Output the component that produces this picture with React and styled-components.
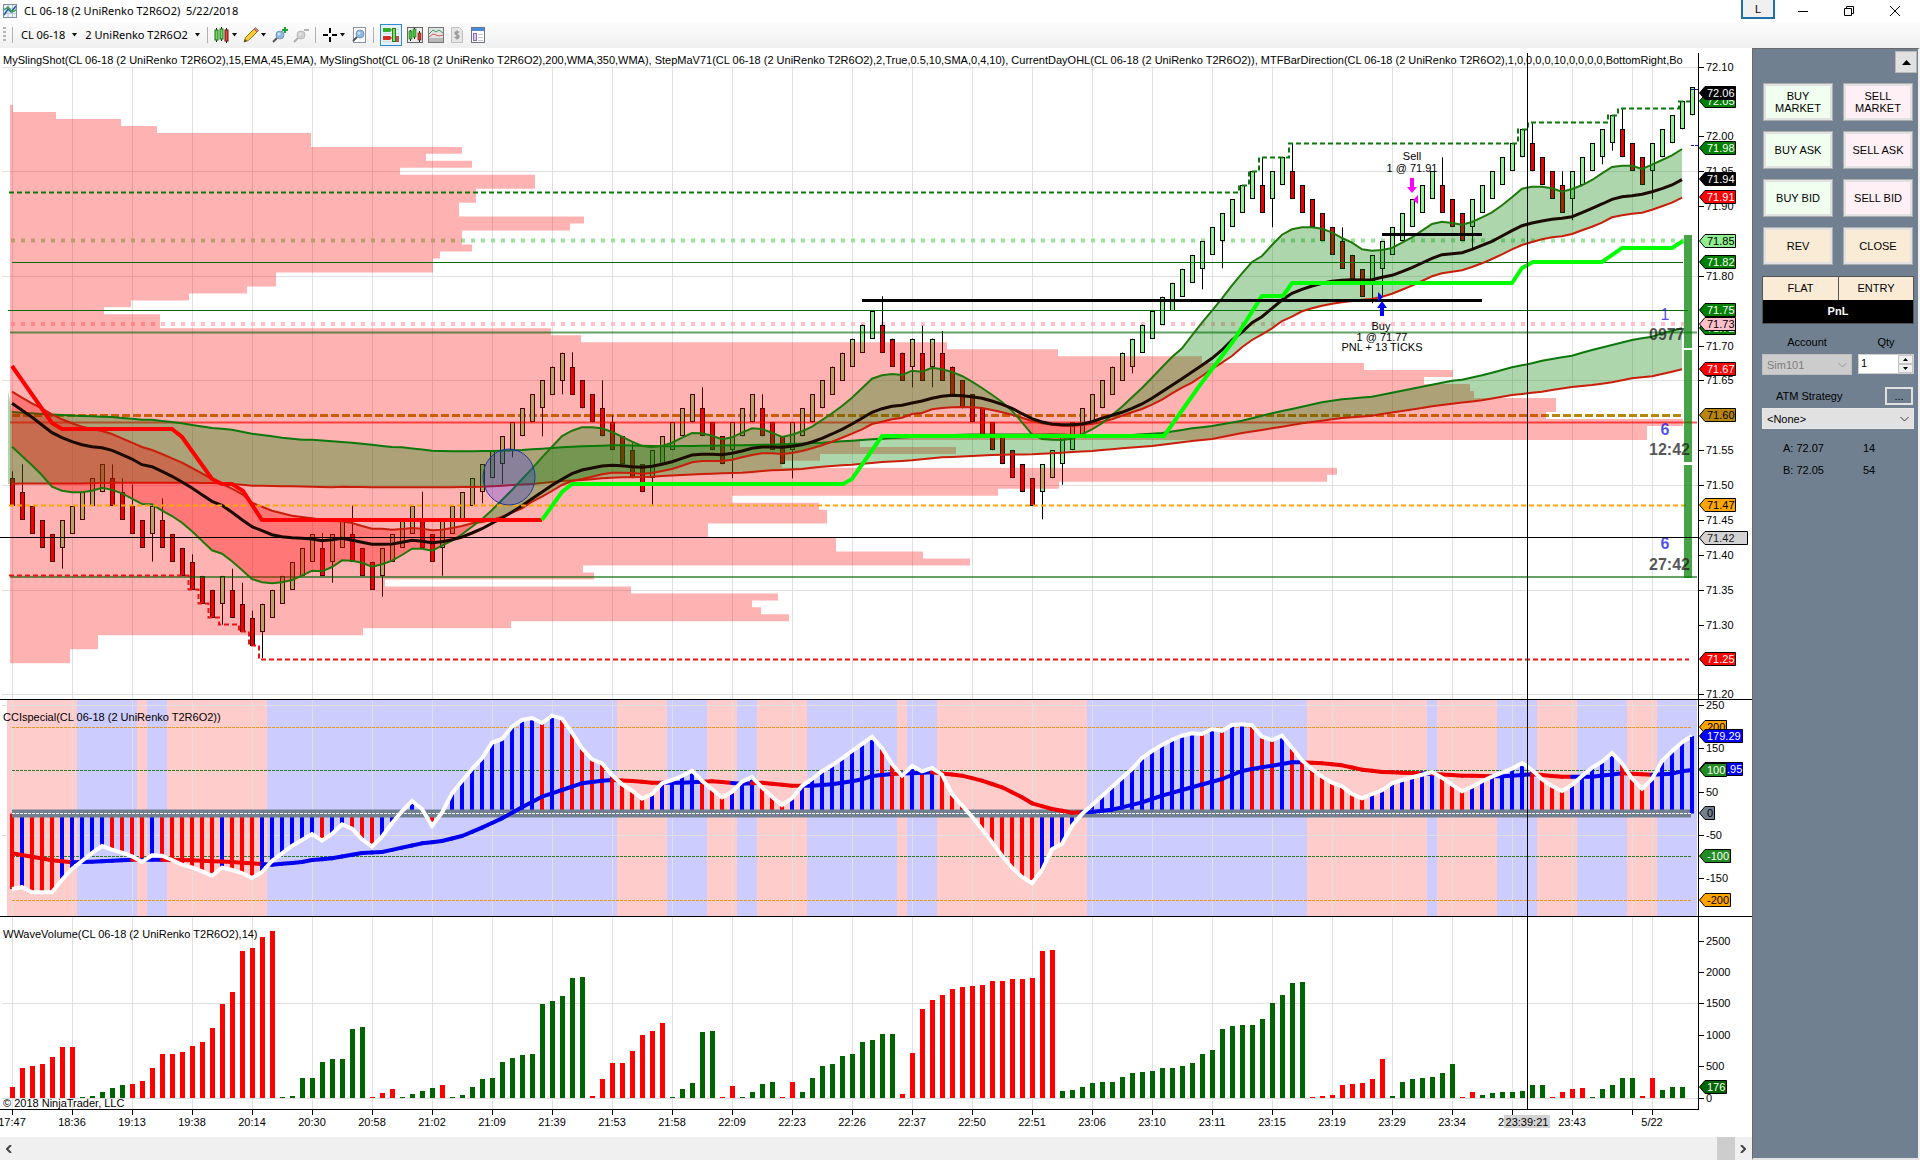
import React from "react";
import styled, { createGlobalStyle, css } from "styled-components";

const GlobalStyle = createGlobalStyle`
  * { box-sizing: border-box; }
  html, body { margin: 0; padding: 0; background: #fff; }
  body { font-family: "Liberation Sans", Arial, sans-serif; font-size: 11px; color: #000; }
  button, input, select { font: inherit; color: inherit; margin: 0; }
`;

/* ---------- data ---------- */

const BAR = 10;
const X0 = 12;
const X = (i) => X0 + BAR * i;
const third = (top, values) => values.map((v) => top + v / 3);
const pairs = (top, list) => {
  const out = [];
  for (let k = 0; k < list.length; k += 2) out.push([list[k], top + list[k + 1] / 3]);
  return out;
};
const expand = (points) => {
  const out = [];
  for (let k = 0; k < points.length - 1; k++) {
    const [a, ya] = points[k];
    const [b, yb] = points[k + 1];
    for (let i = a; i < b; i++) out.push(ya + ((yb - ya) * (i - a)) / (b - a));
  }
  out.push(points[points.length - 1][1]);
  return out;
};

const TICK = 6.977;
const priceY = (p) => 66.5 + (72.1 - p) * 697.7;

/* run lengths of the renko bars: positive = up bars, negative = down bars */
const RUNS = [-5, 5, -4, 1, -6, 1, -3, 6, -1, 2, -3, 4, -2, 13, -8, 5, -3, 3, -3, 9, -3, 1, -1, 1, -10, 22, -1, 2, -8, 7, -3, 6, -4, 5, -3, 5];

const WICKS_HIGH = {
  0: 471.3, 1: 464.3, 10: 464.3, 11: 478.3, 12: 484.3, 15: 498.3, 18: 554.3, 22: 568.7, 23: 582.7, 24: 610.7,
  31: 533, 34: 505.7, 41: 491.7, 56: 352.3, 59: 380.3, 60: 415.3, 62: 443.3, 69: 387.3, 75: 394.3, 87: 296.3,
  91: 325.7, 93: 331, 125: 157.3, 128: 143.3, 133: 227.3, 143: 157.3, 152: 123.3, 155: 171.3, 161: 108.3, 168: 87.3,
};
const WICKS_LOW = {
  5: 568.7, 14: 561.7, 21: 624.7, 25: 658.3, 32: 582.7, 37: 596.7, 43: 575.7, 47: 503.3, 49: 484.3, 50: 457.3,
  53: 436.3, 55: 394.3, 64: 504.7, 72: 478.3, 78: 478.3, 90: 387.3, 92: 387.3, 103: 519.3, 105: 484.7, 112: 373.3,
  119: 289.3, 121: 268.3, 126: 227.3, 136: 303.3, 137: 296.7, 146: 248, 156: 220.3, 159: 164.3, 160: 150.7, 164: 199.3,
};

const CANDLES = (() => {
  const out = [];
  let level = 71.51 + 0.02;
  let first = true;
  RUNS.forEach((run) => {
    for (let k = 0; k < Math.abs(run); k++) {
      if (first) { level = 71.51; first = false; } else level += run > 0 ? 0.02 : -0.02;
      out.push({ up: run > 0, top: priceY(level), height: 4 * TICK });
    }
  });
  out.push({ up: true, top: 94.3, height: 21 });
  return out;
})();

const PROFILE = [
  13, 56, 121, 157, 311, 311, 462, 426, 472, 400, 535, 535, 476, 476, 459, 459, 584, 570, 462, 462, 472, 440, 433, 433,
  276, 276, 247, 189, 131, 104, 160, 160, 551, 581, 947, 1058, 1202, 1364, 1453, 1424, 1470, 1474, 1556, 1556, 1546,
  1683, 1647, 1647, 860, 956, 820, 782, 1337, 1327, 1059, 998, 732, 819, 827, 827, 708, 708, 836, 836, 923, 970, 583,
  594, 385, 631, 778, 752, 761, 789, 511, 363, 98, 98, 70, 70,
];

const FAST_A = [
  ...third(360, [260, 288, 316, 346, 380, 392, 397, 397, 392, 383, 389, 400, 416, 432, 433, 452, 468, 488, 514, 542, 571, 581, 604, 630, 657, 667, 670, 667, 660, 647, 632, 634, 621, 601, 602, 608, 620, 613, 602, 585, 566, 566, 572, 557, 542, 523, 500, 478, 450, 420, 390, 358, 326, 292, 260, 228, 212, 202, 202, 205, 216, 230]),
  ...third(340, [305, 318, 322, 318, 308, 293, 279, 280, 287, 298, 292, 278, 265, 267, 278, 291, 284, 274, 260, 240, 220, 198, 173, 145, 116, 106, 102, 105, 92, 95, 83, 88, 96, 108, 125, 144, 164, 186, 212, 247, 283, 297, 299, 300, 296, 283, 268, 250, 225, 200, 172, 144, 113, 82, 51]),
  ...third(0, [1045, 1006, 968, 932, 895, 856, 820, 786, 768, 735, 704, 688, 682, 682, 686, 697, 714, 728, 748, 752, 750, 744, 728, 712, 692, 672, 665, 669, 674, 666, 652, 637, 616, 592, 566, 560, 560, 565, 575, 567, 556, 540, 520, 501, 497, 497, 507, 494, 480, 466, 447]),
];
const FAST_MID = [
  ...third(360, [130, 151, 172, 195, 218, 233, 245, 254, 260, 263, 271, 284, 297, 314, 320, 334, 349, 366, 384, 404, 424, 436, 457, 479, 500, 512, 524, 530, 533, 535, 537, 542, 539, 535, 541, 547, 553, 553, 552, 547, 541, 544, 548, 545, 539, 531, 519, 506, 490, 474, 456, 437, 416, 396, 376, 358]),
  ...third(340, [401, 390, 384, 378, 376, 377, 380, 382, 379, 373, 365, 355, 345, 343, 343, 344, 340, 333, 325, 321, 321, 322, 319, 314, 306, 295, 282, 268, 252, 235, 217, 206, 199, 196, 189, 183, 175, 169, 166, 167, 170, 175, 183, 193, 205, 221, 236, 246, 252, 254, 254, 252, 245, 235, 226, 217, 205, 192, 175, 155, 136, 116, 96]),
  ...third(0, [1096, 1075, 1050, 1020, 996, 968, 950, 925, 900, 880, 868, 858, 850, 844, 841, 839, 840, 839, 832, 826, 815, 803, 789, 775, 764, 761, 758, 748, 736, 724, 708, 692, 677, 669, 663, 658, 655, 650, 638, 625, 612, 598, 590, 587, 583, 575, 566, 555, 539]),
];
const FAST_B = [
  ...third(360, [95, 113, 130, 146, 163, 178, 190, 200, 207, 213, 222, 235, 248, 261, 270, 282, 295, 308, 324, 340, 357, 372, 386, 402, 428, 440, 452, 460, 467, 471, 475, 480, 483, 484, 489, 498, 506, 506, 509, 507, 504, 506, 511, 509, 504, 498, 490, 486, 480, 470, 458, 445, 425, 410, 393, 375, 363, 357, 350, 343, 338, 338]),
  ...third(340, [399, 401, 399, 393, 387, 377, 367, 363, 363, 363, 359, 352, 345, 340, 340, 342, 339, 333, 325, 316, 305, 293, 281, 268, 252, 245, 238, 233, 222, 219, 208, 204, 202, 201, 202, 204, 210, 217, 224, 233, 243, 250, 254, 257, 258, 255, 252, 245, 238, 227, 217, 207, 194, 179, 160, 143, 128]),
  ...third(0, [1128, 1107, 1088, 1068, 1042, 1020, 1003, 985, 963, 950, 934, 925, 917, 911, 907, 903, 899, 897, 890, 881, 869, 857, 843, 829, 820, 815, 811, 801, 790, 777, 763, 748, 735, 726, 718, 712, 709, 702, 691, 680, 668, 652, 646, 641, 638, 629, 619, 608, 593]),
];
const SLOW_A = expand([
  ...pairs(360, [0, 156, 2, 160, 5, 165, 8, 169, 10, 171, 13, 179, 14, 179, 17, 190, 20, 204, 22, 209, 24, 221, 27, 233, 29, 239, 30, 239, 34, 248, 38, 261, 39, 262, 42, 272, 44, 274, 48, 273, 51, 270, 53, 266, 56, 260, 60, 256]),
  ...pairs(340, [61, 316, 65, 319, 70, 317, 76, 314, 81, 308, 87, 296, 91, 289, 95, 284, 104, 283, 109, 287, 112, 285, 115, 279, 118, 265, 120, 258, 123, 242, 126, 220, 129, 200, 131, 187, 133, 178, 136, 170, 139, 152, 142, 134, 144, 122, 145, 119, 147, 106, 150, 82, 152, 70, 153, 62, 156, 47, 158, 30, 160, 15]),
  ...pairs(0, [162, 1020, 164, 1010, 165, 1000, 167, 985]),
]);
const SLOW_B = expand([
  ...pairs(360, [0, 371, 8, 370, 10, 368, 17, 368, 20, 369, 22, 372, 24, 377, 30, 380, 32, 382, 33, 380, 36, 382, 44, 382, 47, 380, 49, 377, 52, 372, 55, 363, 57, 360, 59, 355, 61, 352]),
  ...pairs(340, [62, 412, 64, 410, 67, 405, 70, 401, 73, 398, 76, 391, 79, 387, 81, 380, 84, 374, 87, 366, 90, 361, 93, 352, 96, 348, 99, 344, 102, 343, 105, 338, 108, 333, 111, 325, 114, 318, 118, 303, 120, 297, 123, 279, 126, 265, 129, 250, 131, 242, 133, 234, 136, 227, 139, 213, 142, 199, 144, 191, 147, 181, 150, 165, 153, 155, 156, 141, 158, 135, 160, 127, 162, 115, 164, 109, 167, 88]),
]);

const STEP_DOWN = "12,366 52,423 62,429 172,429 182,437 212,479 222,484 232,484 243,491 262,520 542,520";
const STEP_UP = "542,520 562,492 572,484 843,484 852,479 882,436 1164,436 1200,385 1234,340 1262,296 1283,296 1292,283 1512,283 1522,268 1533,262 1602,262 1622,248 1672,248 1683,241";

const CCI = [
  ...third(690, [597, 591, 607, 607, 607, 569, 537, 513, 489, 468, 479, 488, 499, 516, 496, 497, 510, 524, 532, 544, 557, 533, 540, 549, 564, 546, 513, 490, 468, 450, 432, 452, 432, 403, 416, 448, 470, 440, 400, 364, 333, 357, 408, 368, 310, 273, 237, 205, 158, 147, 110, 90, 84, 99, 77, 86, 128, 175, 208, 220, 255, 283, 302, 326, 312, 280, 270, 258, 242, 272, 298, 322, 306, 275, 261, 292, 320, 345, 325, 288, 267, 244, 226, 205, 183, 162, 140, 175, 222, 257, 228, 244, 234, 254, 312, 346, 380, 418, 457, 497, 533, 561, 580, 541, 478, 461, 408, 372, 345, 318, 290, 264, 237, 204, 183, 165, 149, 137, 130, 132, 117, 123, 105, 103, 106, 140, 150, 137, 173, 211, 238, 260, 278, 289, 312, 325, 312, 301, 280, 270, 262, 254, 246, 263, 284, 304, 290, 274, 260, 248, 236, 219, 240, 268, 288, 303, 285, 258, 233, 215, 189, 220, 265, 296, 267, 213, 184, 157, 138]),
];
const CCI_AVG = expand(
  pairs(690, [0, 490, 2, 500, 4, 511, 6, 517, 9, 514, 12, 509, 15, 509, 18, 511, 22, 516, 26, 524, 29, 516, 30, 510, 32, 505, 35, 489, 37, 486, 41, 460, 43, 453, 45, 438, 47, 413, 49, 385, 51, 352, 53, 320, 55, 300, 57, 280, 59, 272, 60, 270, 62, 273, 64, 278, 67, 278, 70, 274, 73, 281, 75, 278, 78, 287, 80, 287, 82, 283, 84, 274, 85, 268, 86, 258, 88, 252, 92, 247, 95, 257, 97, 272, 99, 292, 101, 322, 102, 340, 104, 357, 106, 368, 108, 366, 110, 359, 111, 352, 113, 337, 115, 317, 117, 300, 121, 267, 123, 243, 124, 237, 126, 227, 128, 217, 129, 217, 131, 220, 133, 226, 135, 239, 137, 246, 141, 250, 145, 257, 149, 259, 152, 253, 155, 260, 158, 260, 161, 250, 164, 254, 166, 251, 167, 244, 168, 240])
);
/* first bar of each background stripe, alternating falling / rising */
const STRIPES = [0, 7, 13, 14, 16, 26, 61, 66, 70, 73, 75, 80, 89, 90, 93, 108, 130, 142, 143, 149, 153, 157, 162, 165, 169];
const stripeOf = (i) => STRIPES.filter((s) => s <= i).length - 1;

const VOLUME = [
  -11, -30, -32, -34, -41, -51, -51, 1, 2, 6, 10, 13, -14, -17, -30, -44, -44, -46, -52, -56, -70, -94, -106, -147, -150,
  -161, -167, 1, 2, 20, 20, 36, 39, 39, 69, 71, -1, -5, -9, 1, 4, 7, 10, -13, 1, 3, 11, 19, 20, 36, 40, 43, 44, 94, 97,
  102, 120, 121, -2, -19, -35, -35, -47, -63, -67, -75, 1, 9, 15, 66, 67, -1, -12, 1, 6, 14, 16, -1, -16, 6, 20, 32, 34,
  42, 44, 56, 58, 64, 64, -4, -45, -89, -98, -103, -109, -111, -112, -113, -117, -117, -119, -119, -120, -147, -148, 7,
  8, 11, 15, 16, 16, 21, 25, 26, 27, 30, 30, 32, 35, 44, 48, 69, 72, 73, 73, 79, 95, 103, 115, 116, -1, -2, -3, -13, -14,
  -15, -19, -39, 2, 16, 19, 20, 21, 25, 34, -1, -6, 3, 5, 6, 6, 7, 13, 13, -1, -6, -9, -10, 1, 9, 13, 20, 20, -2, -20, 8,
  11, 11,
];

const TIMES = ["17:47", "18:36", "19:13", "19:38", "20:14", "20:30", "20:58", "21:02", "21:09", "21:39", "21:53", "21:58", "22:09", "22:23", "22:26", "22:37", "22:50", "22:51", "23:06", "23:10", "23:11", "23:15", "23:19", "23:29", "23:34"];
const GRID_X = [...Array.from({ length: 28 }, (_, k) => 12 + 60 * k), 1652];

const AXIS_X = 1698;
const CROSS_X = 1527;

/* ---------- drawing helpers ---------- */

const line = (values) => values.map((y, i) => `${X(i)},${y.toFixed(1)}`).join(" ");

const bandPaths = (a, b) => {
  let up = "";
  let down = "";
  const quad = (x1, a1, b1, x2, a2, b2) => `M${x1} ${a1}L${x2} ${a2}L${x2} ${b2}L${x1} ${b1}Z`;
  for (let i = 0; i < a.length - 1; i++) {
    const d1 = b[i] - a[i];
    const d2 = b[i + 1] - a[i + 1];
    const args = [X(i), a[i], b[i]];
    const end = [X(i + 1), a[i + 1], b[i + 1]];
    if (d1 * d2 >= 0) {
      if (d1 + d2 >= 0) up += quad(...args, ...end);
      else down += quad(...args, ...end);
    } else {
      const t = d1 / (d1 - d2);
      const mid = [X(i) + BAR * t, a[i] + (a[i + 1] - a[i]) * t, a[i] + (a[i + 1] - a[i]) * t];
      if (d1 > 0) { up += quad(...args, ...mid); down += quad(...mid, ...end); }
      else { down += quad(...args, ...mid); up += quad(...mid, ...end); }
    }
  }
  return { up, down };
};
const FAST_BAND = bandPaths(FAST_A, FAST_B);
const SLOW_BAND = bandPaths(SLOW_A, SLOW_B);

/* ---------- styled parts ---------- */

const Window = styled.main`
  display: flex;
  flex-direction: column;
  min-height: 100vh;
  height: 100vh;
  overflow: hidden;
`;

const uiFont = css`
  font-family: "Noto Sans", "Open Sans", sans-serif;
  font-size: 11px;
  line-height: 16px;
`;

const TitleBar = styled.header`
  ${uiFont}
  display: flex;
  align-items: center;
  height: 22px;
  padding: 0 2px 0 3px;
  gap: 5px;
`;
const Title = styled.h1`
  font: inherit;
  margin: 0;
  white-space: pre;
`;
const LinkBox = styled.button`
  align-self: flex-start;
  width: 34px;
  height: 19px;
  margin-left: auto;
  padding: 0;
  border: 2px solid #1e6fb0;
  border-top: 0;
  background: #f0f0f0;
  font-family: "Liberation Sans", Arial, sans-serif;
  font-size: 11px;
`;
const WindowButtons = styled.div`
  display: flex;
`;
const WindowButton = styled.button`
  display: grid;
  place-items: center;
  width: 46px;
  height: 22px;
  border: 0;
  padding: 0;
  background: none;
`;

const Toolbar = styled.div`
  ${uiFont}
  display: flex;
  align-items: center;
  gap: 5px;
  height: 26px;
  padding-left: 3px;
  background: linear-gradient(#fdfdfd, #f0f0f0);
`;
const Grip = styled.span`
  width: 3px;
  height: 16px;
  background: repeating-linear-gradient(#b4b4b4 0 2px, transparent 2px 4px);
`;
const Separator = styled.span`
  width: 1px;
  height: 16px;
  margin: 0 1px;
  background: #b0b0b0;
`;
const ToolButton = styled.button`
  display: flex;
  align-items: center;
  justify-content: center;
  gap: ${(p) => (p.$text ? 6 : 1)}px;
  height: 22px;
  min-width: ${(p) => (p.$active ? 22 : 16)}px;
  padding: 0 0 0 ${(p) => (p.$text ? 2 : 0)}px;
  border: ${(p) => (p.$active ? "1px solid #2a8ad4" : "0")};
  background: ${(p) => (p.$active ? "#e5f1fb" : "none")};
  white-space: nowrap;
`;

const Body = styled.div`
  display: flex;
  flex: 1;
  min-height: 0;
`;
const ChartColumn = styled.section`
  display: flex;
  flex-direction: column;
  flex: 1;
  min-width: 0;
`;
const Pane = styled.div`
  flex: ${(p) => p.$weight} 1 0;
  min-height: 0;
`;
const PaneSvg = styled.svg`
  display: block;
  width: 100%;
  height: 100%;
  font-family: "Liberation Sans", Arial, sans-serif;
  font-size: 11px;
`;
const ScrollBar = styled.div`
  display: flex;
  align-items: center;
  justify-content: space-between;
  height: 23px;
  padding: 0 3px;
  background: #f0f0f0;
`;
const ScrollEnd = styled.div`
  display: flex;
  align-self: stretch;
  align-items: center;
  gap: 2px;
`;
const ScrollButton = styled.button`
  display: grid;
  place-items: center;
  width: 12px;
  height: 20px;
  padding: 0;
  border: 0;
  background: none;
`;
const Thumb = styled.span`
  align-self: stretch;
  width: 18px;
  background: #cdcdcd;
`;

const Sidebar = styled.aside`
  display: flex;
  flex-direction: column;
  width: 168px;
  background: #708090;
  border: solid #6a6a6a;
  border-width: 1px 0 0 1px;
  border-right: 2px solid #f0f0f0;
  border-bottom: 2px solid #e4e4e4;
  padding: 2px 1px 0 9px;
`;
const Collapse = styled.button`
  align-self: flex-end;
  display: grid;
  place-items: center;
  width: 22px;
  height: 22px;
  padding: 0;
  border: 1px solid #b8b8b8;
  background: #e1e1e1;
`;
const Content = styled.div`
  display: flex;
  flex-direction: column;
  padding-right: 3px;
`;
const OrderGrid = styled.div`
  display: grid;
  grid-template-columns: 70px 70px;
  grid-auto-rows: 38px;
  gap: 10px;
  padding: 10px 0 11px 1px;
`;
const OrderButton = styled.button`
  padding: 0;
  border: 1px solid #adadad;
  box-shadow: inset 0 0 0 2px #e1e1e1;
  background: ${(p) => p.$tone};
  line-height: 12px;
`;
const Position = styled.dl`
  display: grid;
  grid-template-columns: 1fr 1fr;
  margin: 0;
  border: 1px solid #555;
  background: #faebd7;
  text-align: center;
`;
const PositionCell = styled.dt`
  height: 23px;
  line-height: 22px;
  border-left: ${(p) => (p.$divided ? "1px solid #555" : "0")};
`;
const Pnl = styled.dd`
  grid-column: 1 / -1;
  margin: 0;
  height: 23px;
  line-height: 23px;
  background: #000;
  color: #fff;
  font-weight: bold;
`;
const FieldGrid = styled.div`
  display: grid;
  grid-template-columns: 90px 56px;
  column-gap: 6px;
  row-gap: 5px;
  padding-top: 12px;
`;
const FieldLabel = styled.label`
  text-align: center;
  line-height: 13px;
`;
const SelectBox = styled.div`
  display: grid;
  align-items: center;
  > * { grid-area: 1 / 1; }
  > svg { justify-self: end; margin-right: 5px; pointer-events: none; }
`;
const Select = styled.select`
  appearance: none;
  width: 100%;
  height: 21px;
  padding: 0 4px;
  border: 1px solid ${(p) => (p.disabled ? "#bfbfbf" : "#e8e8e8")};
  border-radius: 0;
  background: ${(p) => (p.disabled ? "#cccccc" : "#e1e1e1")};
  color: ${(p) => (p.disabled ? "#7d7d7d" : "#000")};
  opacity: 1;
`;
const Quantity = styled.div`
  display: flex;
  height: 20px;
  border: 1px solid #d0d0d0;
  background: #fff;
`;
const QuantityInput = styled.input`
  flex: 1;
  width: 0;
  padding: 0 2px 3px;
  border: 0;
  background: none;
`;
const Stepper = styled.div`
  display: grid;
  width: 15px;
  background: #f0f0f0;
`;
const StepButton = styled.button`
  display: grid;
  place-items: center;
  padding: 0;
  border: 1px solid #c4c4c4;
  background: #f0f0f0;
`;
const StrategyRow = styled.div`
  display: flex;
  align-items: center;
  justify-content: space-between;
  padding: 12px 1px 3px 14px;
`;
const MoreButton = styled.button`
  width: 28px;
  height: 18px;
  padding: 0;
  border: 2px solid #e1e1e1;
  background: #708090;
  line-height: 10px;
`;
const QuoteTable = styled.table`
  width: 110px;
  margin: 8px 0 0 21px;
  border-collapse: collapse;
`;
const QuoteCell = styled.td`
  width: ${(p) => p.$width}px;
  height: 22px;
  padding: 0;
`;

/* ---------- icons ---------- */

const Caret = () => (
  <svg width="7" height="4" viewBox="0 0 7 4" aria-hidden="true"><path d="M1 0h5L3.500 3.500Z" fill="#111" /></svg>
);
const Chevron = ({ color }) => (
  <svg width="9" height="6" viewBox="0 0 9 6" aria-hidden="true"><path d="M.5 1l4 4 4-4" fill="none" stroke={color} /></svg>
);
const Icon = ({ children }) => (
  <svg width="16" height="16" viewBox="0 0 16 16" aria-hidden="true">{children}</svg>
);
const Lens = ({ cx, cy, gray }) => (
  <g>
    <path d={`M${cx - 3} ${cy + 3}L${cx - 7} ${cy + 7}`} stroke={gray ? "#aaa" : "#555"} strokeWidth="2" />
    <circle cx={cx} cy={cy} r="4" fill={gray ? "#d0d0d0" : "#8fb8e0"} stroke={gray ? "#b8b8b8" : "#7898b8"} />
    <circle cx={cx - 1} cy={cy - 1} r="1.500" fill={gray ? "#e4e4e4" : "#cfe4f6"} />
  </g>
);
const ChartIcon = () => (
  <Icon>
    <rect x=".5" y="1.500" width="13" height="13" fill="#eef2fa" stroke="#7a8ea8" />
    <path d="M1 5.500h12M1 10.500h12M5 2v12M9.500 2v12" stroke="#b8c8dc" />
    <path d="M1 12l4-6 3 3 5-6" stroke="#2456b0" strokeWidth="1.500" fill="none" />
    <path d="M1 7l4-3 4 5 4-2" stroke="#3ca04a" strokeWidth="1.500" fill="none" />
  </Icon>
);
const CandlesIcon = () => (
  <Icon>
    <path d="M2.500 1v14M7.500 0v14M12.500 1v15" stroke="#222" />
    <rect x="1" y="3" width="3" height="10" fill="#6ee05a" stroke="#1d6b16" />
    <rect x="6" y="2" width="3" height="10" fill="#6ee05a" stroke="#1d6b16" />
    <rect x="11" y="3" width="3" height="11" fill="#e04a40" stroke="#6a1410" />
  </Icon>
);
const PencilIcon = () => (
  <Icon>
    <path d="M1 15l1.500-4.500L11 2l3 3-8.500 8.500Z" fill="#f4cc3a" stroke="#9a7a10" />
    <path d="M11 2l1.500-1.500 3 3L14 5Z" fill="#e0807a" stroke="#a04a40" strokeWidth=".6" />
    <path d="M1 15l1-3 2 2Z" fill="#444" />
  </Icon>
);
const ZoomInIcon = () => (
  <Icon><Lens cx={8} cy={8} /><path d="M13 0v6M10 3h6" stroke="#19a336" strokeWidth="2" /></Icon>
);
const ZoomOutIcon = () => (
  <Icon><Lens cx={8} cy={8} gray /><path d="M11 3h5" stroke="#b4b4b4" strokeWidth="2" /></Icon>
);
const CrosshairIcon = () => (
  <Icon><path d="M8 1v5M8 10v5M1 8h5M10 8h5" stroke="#000" strokeWidth="2" /></Icon>
);
const PageLensIcon = () => (
  <Icon><rect x="2.500" y=".5" width="12" height="15" fill="#fff" stroke="#8a94a4" /><Lens cx={9} cy={7} /></Icon>
);
const TraderIcon = () => (
  <Icon>
    <path d="M0 2.500h16M0 6.500h16M0 10.500h16M0 14.500h16" stroke="#d8d8d8" />
    <path d="M0 1h7l2 2-2 2H0Z" fill="#2fae2a" />
    <path d="M0 9h7l2 2-2 2H0Z" fill="#d62c24" />
    <rect x="9.500" y="1.500" width="3" height="13" fill="#7be06a" stroke="#2a7a20" />
    <rect x="13" y="9" width="3" height="6" fill="#c0504a" />
  </Icon>
);
const BarsBoxIcon = () => (
  <Icon>
    <rect x=".5" y=".5" width="15" height="15" fill="#ececec" stroke="#666" />
    <path d="M3.500 3v11M7.500 1v11M12.500 4v11" stroke="#222" />
    <rect x="2" y="4" width="3" height="8" fill="#4bc23c" stroke="#1d6b16" strokeWidth=".6" />
    <rect x="6" y="2" width="3" height="8" fill="#4bc23c" stroke="#1d6b16" strokeWidth=".6" />
    <rect x="11" y="6" width="3" height="7" fill="#d83a30" stroke="#6a1410" strokeWidth=".6" />
  </Icon>
);
const LinesBoxIcon = () => (
  <Icon>
    <rect x=".5" y=".5" width="15" height="15" fill="#e2e2e2" stroke="#777" />
    <rect x="1" y="11" width="14" height="4" fill="#b8b8b8" />
    <path d="M1 7l4-4 3 2 3-2 4 3" stroke="#38a060" fill="none" />
    <path d="M1 10l4-3 3 1 3 1 4-1" stroke="#d0605a" fill="none" />
  </Icon>
);
const DollarIcon = () => (
  <Icon>
    <path d="M2.500.5h8l3 3v12h-11Z" fill="#e6e6e6" stroke="#c0c0c0" />
    <path d="M10 5.500c-1-1-4-1-4 .8s4 1.200 4 3.200-3 1.800-4.200.5M8 3.500v9" stroke="#9a9a9a" strokeWidth="1.500" fill="none" />
  </Icon>
);
const LayoutIcon = () => (
  <Icon>
    <rect x="1.500" y=".5" width="13" height="15" fill="#fff" stroke="#6a7488" />
    <rect x="2" y="1" width="12" height="3" fill="#4a8ad8" />
    <rect x="3.500" y="6.500" width="3" height="7" fill="#d8c8f4" stroke="#8a6ad0" />
    <path d="M8 7.500h5M8 10.500h5M8 13.500h5" stroke="#c8c8c8" />
  </Icon>
);

/* ---------- axis pieces ---------- */

const AxisLabel = ({ y, children }) => (
  <g>
    <path d={`M${AXIS_X} ${Math.round(y) + 0.5}h6`} stroke="#000" />
    <text x="1706" y={Math.round(y) + 4}>{children}</text>
  </g>
);
const Tag = ({ y, fill, color = "#fff", width = 36, textX = 1707, children }) => {
  const c = Math.round(y);
  return (
    <g>
      <path d={`M1699.500 ${c}L1705 ${c - 6.5}H${1699.5 + width}V${c + 6.5}H1705Z`} fill={fill} stroke="#000" />
      <text x={textX} y={c + 4} fill={color}>{children}</text>
    </g>
  );
};
const CrossLine = ({ from, to }) => <path d={`M${CROSS_X + 0.5} ${from}V${to}`} stroke="#000" />;

const PRICES = [72.1, 72.0, 71.95, 71.9, 71.8, 71.7, 71.65, 71.55, 71.5, 71.45, 71.4, 71.35, 71.3, 71.2];
const PRICE_TAGS = [
  [101, "#008000", "#fff", "72.05"], [93, "#000", "#fff", "72.06"], [148, "#008000", "#fff", "71.98"],
  [179, "#000", "#fff", "71.94"], [197, "#f00", "#fff", "71.91"], [241, "#90ee90", "#000", "71.85"],
  [262, "#008000", "#fff", "71.82"], [310, "#008000", "#fff", "71.75"], [328, "#008000", "#fff", "71.72"],
  [324, "#ffc0cb", "#000", "71.73"], [369, "#f00", "#fff", "71.67"], [415, "#b8860b", "#000", "71.60"],
  [505, "#ffa500", "#000", "71.47"], [659, "#f00", "#fff", "71.25"],
];

const PricePane = () => (
  <PaneSvg viewBox="0 48 1752 652" preserveAspectRatio="none" role="img" aria-label="Price chart">
    <g stroke="#e0e0e0">
      {GRID_X.map((x) => <path key={x} d={`M${x + 0.5} 66V699`} />)}
      {[72.1, 71.95, 71.8, 71.65, 71.5, 71.35, 71.2].map((p) => <path key={p} d={`M2 ${Math.round(priceY(p)) + 0.5}H1698`} />)}
    </g>
    <path d="M11 240.500H1684" stroke="#9be39b" strokeWidth="4" strokeDasharray="4 6" />
    <path d="M11 324H1684" stroke="#ffc0cb" strokeWidth="4" strokeDasharray="4 6" />
    <path d="M12 415.500H1683" stroke="#b8860b" strokeWidth="3" strokeDasharray="8 3" />
    <g>
      {CANDLES.map((c, i) => {
        const bottom = c.top + c.height;
        const high = WICKS_HIGH[i] || c.top;
        const low = WICKS_LOW[i] || bottom;
        return (
          <g key={i}>
            <path d={`M${X(i) + 0.5} ${high}V${low}`} stroke="#000" />
            <rect x={X(i) - 1.5} y={Math.round(c.top) + 0.5} width="4" height={Math.round(c.height) - 1} fill={c.up ? "#90ee90" : "#ee0000"} stroke="#000" />
          </g>
        );
      })}
    </g>
    <path
      d={`M10 105${PROFILE.map((r, k) => `H${r}V${(105 + (k + 1) * TICK).toFixed(1)}`).join("")}H10Z`}
      fill="#f00" fillOpacity=".3"
    />
    <path d="M12 262.500H1683M8 310.500H1688" stroke="#0a6a0a" />
    <path d="M10 332.500H1697M10 577H1697" stroke="#006400" strokeOpacity=".6" strokeWidth="2" />
    <path d="M10 422.500H1697" stroke="#ff0000" strokeOpacity=".65" strokeWidth="2" />
    <path d="M8 391L12 412V484L8 484Z" fill="#008000" fillOpacity=".32" />
    <path d={SLOW_BAND.up} fill="#008000" fillOpacity=".32" />
    <polyline points={line(SLOW_A)} fill="none" stroke="#0c780c" strokeWidth="2" />
    <polyline points={line(SLOW_B)} fill="none" stroke="#c81e0a" strokeWidth="2" />
    <path d={FAST_BAND.up} fill="#008000" fillOpacity=".32" />
    <path d={FAST_BAND.down} fill="#ff0000" fillOpacity=".33" />
    <polyline points={line(FAST_B)} fill="none" stroke="#c81e0a" strokeWidth="2" />
    <polyline points={line(FAST_A)} fill="none" stroke="#1e780a" strokeWidth="2" />
    <polyline points={line(FAST_MID)} fill="none" stroke="#1c0a00" strokeWidth="3" />
    <path d="M9 505.500H1686" stroke="#ffa500" strokeWidth="2" strokeDasharray="5 3" />
    <path
      d="M9 192.500H1239V185.500H1249V171.500H1259V157.500H1289V143.500H1518V129.500H1528V122.500H1608V115.500H1618V108.500H1679V101.500H1690"
      fill="none" stroke="#0a780a" strokeWidth="2" strokeDasharray="5 3"
    />
    <path
      d="M9 575.500H188.500V589.500H198.500V603.500H208.500V617.500H219V624.500H239V631.500H249V645.500H259V659.500H1689"
      fill="none" stroke="#e61414" strokeWidth="2" strokeDasharray="5 3"
    />
    <polyline points={STEP_DOWN} fill="none" stroke="#f00" strokeWidth="4" />
    <polyline points={STEP_UP} fill="none" stroke="#0f0" strokeWidth="4" />
    <path d="M862 300.500H1482M1382 234.500H1482" stroke="#000" strokeWidth="3" />
    <ellipse cx="509" cy="477" rx="26" ry="28" fill="#1e1eff" fillOpacity=".25" stroke="#1c3a96" />
    <path d="M1684 235h8v113h-8ZM1684 350h8v112h-8ZM1684 465h8v113h-8Z" fill="#008000" fillOpacity=".72" />
    <g fontSize="16" fontWeight="bold" fillOpacity=".75">
      <g fill="#1414e6" textAnchor="middle">
        <text x="1665" y="320" fontWeight="normal">1</text>
        <text x="1665" y="435">6</text>
        <text x="1665" y="549">6</text>
      </g>
      <g fill="#202020">
        <text x="1649" y="340">0977</text>
        <text x="1649" y="455">12:42</text>
        <text x="1649" y="570">27:42</text>
      </g>
    </g>
    <g textAnchor="middle">
      <text x="1412" y="160">Sell</text>
      <text x="1412" y="172">1 @ 71.91</text>
      <text x="1381" y="330">Buy</text>
      <text x="1382" y="341">1 @ 71.77</text>
      <text x="1382" y="351">PNL + 13 TICKS</text>
    </g>
    <path d="M1410 178h4v9h3l-5 6-5-6h3ZM1418 195v9l-5-4Z" fill="#f0f" />
    <path d="M1380 316h4v-8h3l-5-7-5 7h3ZM1378 292v10l5-5Z" fill="#00f" />
    <text x="3" y="64">MySlingShot(CL 06-18 (2 UniRenko T2R6O2),15,EMA,45,EMA), MySlingShot(CL 06-18 (2 UniRenko T2R6O2),200,WMA,350,WMA), StepMaV71(CL 06-18 (2 UniRenko T2R6O2),2,True,0.5,10,SMA,0,4,10), CurrentDayOHL(CL 06-18 (2 UniRenko T2R6O2)), MTFBarDirection(CL 06-18 (2 UniRenko T2R6O2),1,0,0,0,0,10,0,0,0,0,BottomRight,Bo</text>
    <path d="M1691 89.500h7M1691 145.500h7" stroke="#1414a0" strokeDasharray="3 1" />
    <CrossLine from={53} to={700} />
    <path d="M0 537.500H1698" stroke="#000" />
    <rect x="1698" y="48" width="54" height="651" fill="#fff" />
    <path d="M1698.500 53V700" stroke="#000" />
    {PRICES.map((p) => <AxisLabel key={p} y={priceY(p)}>{p.toFixed(2)}</AxisLabel>)}
    {PRICE_TAGS.map(([y, fill, color, label]) => <Tag key={label} y={y} fill={fill} color={color}>{label}</Tag>)}
    <Tag y={538} fill="#d3d3d3" color="#222" width={48}>71.42</Tag>
    <path d="M0 699.500H1752" stroke="#000" />
  </PaneSvg>
);

const ZERO = 813.5;
const CciPane = () => (
  <PaneSvg viewBox="0 700 1752 217" preserveAspectRatio="none" role="img" aria-label="CCI chart">
    {STRIPES.slice(0, -1).map((s, k) => {
      const from = X(s) - 5;
      const to = X(STRIPES[k + 1]) - 5;
      return <rect key={s} x={from} y="700" width={to - from} height="216" fill={k % 2 ? "#ccccff" : "#ffcccc"} />;
    })}
    <g stroke="#e0e0e0">
      {GRID_X.map((x) => <path key={x} d={`M${x + 0.5} 700V916`} />)}
      <path d="M2 705.500H1698M2 835.500H1698" />
    </g>
    <path d="M12 727.500H1691M12 900.500H1691" stroke="#e89a20" strokeDasharray="3 1" />
    <path d="M12 770.500H1691M12 856.500H1691" stroke="#2a7a2a" strokeDasharray="3 1" />
    {CCI.map((y, i) => {
      const rising = i > 0 && y < CCI[i - 1];
      return <rect key={i} x={X(i) - 2} y={Math.min(y, ZERO)} width="4" height={Math.abs(y - ZERO)} fill={rising ? "#0000ff" : "#ff0000"} />;
    })}
    <path d="M12 813.500H1691" stroke="#708090" strokeWidth="8" />
    <path d="M12 813.500H1691" stroke="#fff" strokeDasharray="3 1" />
    {CCI_AVG.slice(0, -1).map((y, i) => (
      <path key={i} d={`M${X(i)} ${y}L${X(i + 1)} ${CCI_AVG[i + 1]}`} stroke={stripeOf(i + 1) % 2 ? "#0000ee" : "#ee0000"} strokeWidth="4" strokeLinecap="round" />
    ))}
    <polyline points={line(CCI)} fill="none" stroke="#fff" strokeWidth="4" />
    <rect x="1690" y="737" width="4" height="76" fill="#0000ff" />
    <text x="3" y="721">CCIspecial(CL 06-18 (2 UniRenko T2R6O2))</text>
    <CrossLine from={700} to={917} />
    <rect x="1697" y="700" width="55" height="216" fill="#fff" />
    <path d="M1698.500 700V917" stroke="#000" />
    <AxisLabel y={705}>250</AxisLabel>
    <AxisLabel y={748}>150</AxisLabel>
    <AxisLabel y={792}>50</AxisLabel>
    <AxisLabel y={835}>-50</AxisLabel>
    <AxisLabel y={878}>-150</AxisLabel>
    <Tag y={727} fill="#ffa500" color="#000" width={27}>200</Tag>
    <Tag y={736} fill="#0000ff" width={43}>179.29</Tag>
    <Tag y={769} fill="#0000ff" width={43} textX={1727}>.95</Tag>
    <Tag y={770} fill="#228b22" width={27}>100</Tag>
    <Tag y={813} fill="#708090" color="#000" width={15}>0</Tag>
    <Tag y={856} fill="#228b22" width={31}>-100</Tag>
    <Tag y={900} fill="#ffa500" color="#000" width={31}>-200</Tag>
    <path d="M0 916.500H1752" stroke="#000" />
  </PaneSvg>
);

const VolumePane = () => (
  <PaneSvg viewBox="0 917 1752 193" preserveAspectRatio="none" role="img" aria-label="Wave volume chart">
    <g stroke="#e0e0e0">
      {GRID_X.map((x) => <path key={x} d={`M${x + 0.5} 917V1109`} />)}
      <path d="M2 1003.500H1698M2 1098.500H1698" />
    </g>
    <text x="3" y="938">WWaveVolume(CL 06-18 (2 UniRenko T2R6O2),14)</text>
    {VOLUME.map((v, i) => (
      <rect key={i} x={X(i) - 2} y={1098 - Math.abs(v)} width="5" height={Math.abs(v)} fill={v < 0 ? "#ff0000" : "#006400"} />
    ))}
    <text x="3" y="1107">© 2018 NinjaTrader, LLC</text>
    <CrossLine from={917} to={1110} />
    <path d="M1698.500 917V1110M0 1109.500H1699" stroke="#000" />
    <AxisLabel y={941}>2500</AxisLabel>
    <AxisLabel y={972}>2000</AxisLabel>
    <AxisLabel y={1003}>1500</AxisLabel>
    <AxisLabel y={1035}>1000</AxisLabel>
    <AxisLabel y={1066}>500</AxisLabel>
    <AxisLabel y={1098}>0</AxisLabel>
    <Tag y={1087} fill="#006400" width={27}>176</Tag>
  </PaneSvg>
);

const TimePane = () => (
  <PaneSvg viewBox="0 1110 1752 27" preserveAspectRatio="none" role="img" aria-label="Time axis">
    <g stroke="#000">{GRID_X.map((x) => <path key={x} d={`M${x + 0.5} 1110v5`} />)}</g>
    <g textAnchor="middle">
      {TIMES.map((t, k) => <text key={t} x={12 + 60 * k} y="1126">{t}</text>)}
      <text x="1501" y="1126">2</text>
      <text x="1572" y="1126">23:43</text>
      <text x="1652" y="1126">5/22</text>
      <rect x="1504" y="1115" width="46" height="13" fill="#d3d3d3" />
      <text x="1527" y="1126">23:39:21</text>
    </g>
  </PaneSvg>
);

/* ---------- app ---------- */

const ORDER_BUTTONS = [
  ["BUY MARKET", "#f0fff0"], ["SELL MARKET", "#fff0f5"],
  ["BUY ASK", "#f0fff0"], ["SELL ASK", "#fff0f5"],
  ["BUY BID", "#f0fff0"], ["SELL BID", "#fff0f5"],
  ["REV", "#faebd7"], ["CLOSE", "#faebd7"],
];

export default function App() {
  return (
    <Window>
      <GlobalStyle />
      <TitleBar>
        <ChartIcon />
        <Title>{"CL 06-18 (2 UniRenko T2R6O2)  5/22/2018"}</Title>
        <LinkBox type="button">L</LinkBox>
        <WindowButtons>
          <WindowButton type="button" aria-label="Minimize">
            <svg width="10" height="10"><path d="M0 5.500h10" stroke="#000" /></svg>
          </WindowButton>
          <WindowButton type="button" aria-label="Restore">
            <svg width="10" height="10"><path d="M.5 2.500h7v7h-7ZM2.500 2.500v-2h7v7h-2" fill="none" stroke="#000" /></svg>
          </WindowButton>
          <WindowButton type="button" aria-label="Close">
            <svg width="10" height="10"><path d="M0 0l10 10M10 0L0 10" stroke="#000" /></svg>
          </WindowButton>
        </WindowButtons>
      </TitleBar>
      <Toolbar>
        <Grip />
        <Separator />
        <ToolButton type="button" $text>CL 06-18<Caret /></ToolButton>
        <ToolButton type="button" $text>2 UniRenko T2R6O2<Caret /></ToolButton>
        <Separator />
        <ToolButton type="button" aria-label="Chart style"><CandlesIcon /><Caret /></ToolButton>
        <ToolButton type="button" aria-label="Drawing tools"><PencilIcon /><Caret /></ToolButton>
        <ToolButton type="button" aria-label="Zoom in"><ZoomInIcon /></ToolButton>
        <ToolButton type="button" aria-label="Zoom out"><ZoomOutIcon /></ToolButton>
        <Separator />
        <ToolButton type="button" aria-label="Cursor"><CrosshairIcon /><Caret /></ToolButton>
        <ToolButton type="button" aria-label="Data box"><PageLensIcon /></ToolButton>
        <Separator />
        <ToolButton type="button" aria-label="Chart trader" $active><TraderIcon /></ToolButton>
        <ToolButton type="button" aria-label="Data series"><BarsBoxIcon /></ToolButton>
        <ToolButton type="button" aria-label="Indicators"><LinesBoxIcon /></ToolButton>
        <ToolButton type="button" aria-label="Strategies"><DollarIcon /></ToolButton>
        <ToolButton type="button" aria-label="Properties"><LayoutIcon /></ToolButton>
      </Toolbar>
      <Body>
        <ChartColumn>
          <Pane $weight={652}><PricePane /></Pane>
          <Pane $weight={217}><CciPane /></Pane>
          <Pane $weight={193}><VolumePane /></Pane>
          <Pane $weight={27}><TimePane /></Pane>
          <ScrollBar>
            <ScrollButton type="button" aria-label="Scroll left">
              <svg width="6" height="8"><path d="M5 0L1 4l4 4" fill="none" stroke="#444" strokeWidth="2" /></svg>
            </ScrollButton>
            <ScrollEnd>
              <Thumb />
              <ScrollButton type="button" aria-label="Scroll right">
                <svg width="6" height="8"><path d="M1 0l4 4-4 4" fill="none" stroke="#444" strokeWidth="2" /></svg>
              </ScrollButton>
            </ScrollEnd>
          </ScrollBar>
        </ChartColumn>
        <Sidebar>
          <Collapse type="button" aria-label="Collapse panel">
            <svg width="9" height="5"><path d="M0 5h9L4.500 0Z" /></svg>
          </Collapse>
          <Content>
            <OrderGrid>
              {ORDER_BUTTONS.map(([label, tone]) => <OrderButton key={label} type="button" $tone={tone}>{label}</OrderButton>)}
            </OrderGrid>
            <Position>
              <PositionCell>FLAT</PositionCell>
              <PositionCell $divided>ENTRY</PositionCell>
              <Pnl>PnL</Pnl>
            </Position>
            <FieldGrid>
              <FieldLabel htmlFor="account">Account</FieldLabel>
              <FieldLabel htmlFor="qty">Qty</FieldLabel>
              <SelectBox>
                <Select id="account" disabled defaultValue="Sim101"><option>Sim101</option></Select>
                <Chevron color="#999" />
              </SelectBox>
              <Quantity>
                <QuantityInput id="qty" type="text" defaultValue="1" />
                <Stepper>
                  <StepButton type="button" aria-label="Increase"><svg width="5" height="3"><path d="M0 3h5L2.500 0Z" /></svg></StepButton>
                  <StepButton type="button" aria-label="Decrease"><svg width="5" height="3"><path d="M0 0h5L2.500 3Z" /></svg></StepButton>
                </Stepper>
              </Quantity>
            </FieldGrid>
            <StrategyRow>
              <FieldLabel htmlFor="strategy">ATM Strategy</FieldLabel>
              <MoreButton type="button" aria-label="More strategies">...</MoreButton>
            </StrategyRow>
            <SelectBox>
              <Select id="strategy" defaultValue="<None>"><option>{"<None>"}</option></Select>
              <Chevron color="#333" />
            </SelectBox>
            <QuoteTable>
              <tbody>
                <tr><QuoteCell $width={80}>A: 72.07</QuoteCell><QuoteCell $width={30}>14</QuoteCell></tr>
                <tr><QuoteCell $width={80}>B: 72.05</QuoteCell><QuoteCell $width={30}>54</QuoteCell></tr>
              </tbody>
            </QuoteTable>
          </Content>
        </Sidebar>
      </Body>
    </Window>
  );
}
